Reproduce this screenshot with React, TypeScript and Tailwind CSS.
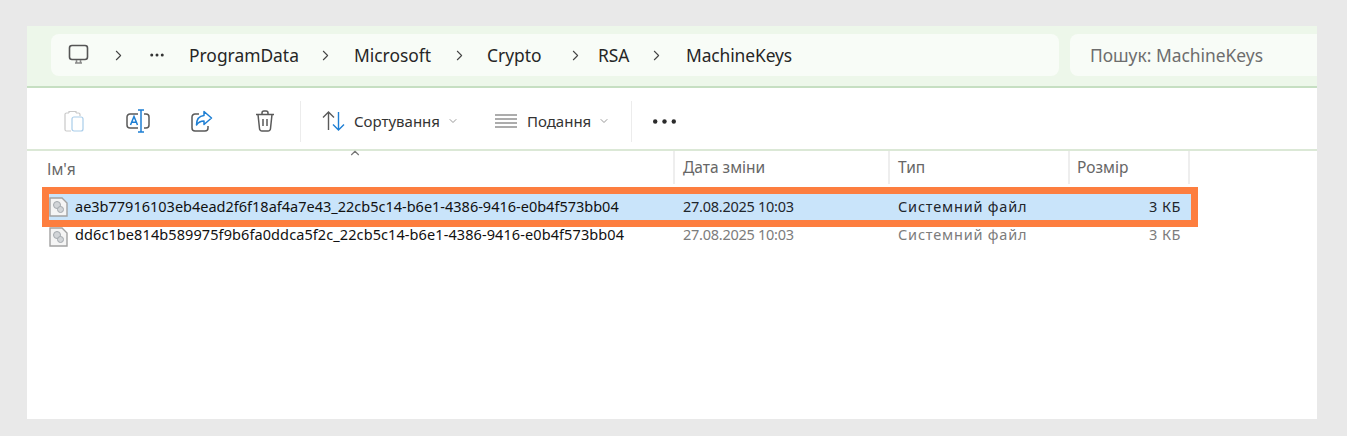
import React from "react";
import { ChevronRight, ChevronDown, ChevronUp, Ellipsis } from "lucide-react";

const crumbs = [
  { name: "ProgramData", width: "w-[109px]", gap: "ml-[19px] mr-[20px]" },
  { name: "Microsoft", width: "w-[78px]", gap: "ml-[19px] mr-[19px]" },
  { name: "Crypto", width: "w-[55px]", gap: "ml-[25px] mr-[14px]" },
  { name: "RSA", width: "w-[33px]", gap: "ml-[17px] mr-[21px]" },
];

const files = [
  {
    name: "ae3b77916103eb4ead2f6f18af4a7e43_22cb5c14-b6e1-4386-9416-e0b4f573bb04",
    tracking: "tracking-[0px]",
    selected: true,
  },
  {
    name: "dd6c1be814b589975f9b6fa0ddca5f2c_22cb5c14-b6e1-4386-9416-e0b4f573bb04",
    tracking: "tracking-[0.09px]",
    selected: false,
  },
];

function MonitorIcon() {
  return (
    <svg width="22" height="22" viewBox="0 0 22 22" fill="none" stroke="#555" strokeWidth="1.6">
      <rect x="1.5" y="1.5" width="18" height="14" rx="2.5" />
      <path d="M7 19h7M8.5 16v3M12.5 16v3" stroke="#888" />
    </svg>
  );
}

function PasteIcon() {
  return (
    <svg width="20" height="22" viewBox="0 0 20 22" fill="none" strokeWidth="1.2">
      <path d="M5 3H2.5A1.5 1.5 0 0 0 1 4.5v15A1.5 1.5 0 0 0 2.5 21H7" stroke="#c9c9c9" />
      <path d="M5 3V1.5h7V3M12 3h2.5A1.5 1.5 0 0 1 16 4.5V6" stroke="#c9c9c9" />
      <rect x="8" y="7" width="11" height="14" rx="2" stroke="#a9cdea" />
    </svg>
  );
}

function RenameIcon() {
  return (
    <svg width="24" height="24" viewBox="0 0 24 24" fill="none" strokeWidth="1.5">
      <path d="M12 5H4a3 3 0 0 0-3 3v8a3 3 0 0 0 3 3h8M18 5h2a3 3 0 0 1 3 3v8a3 3 0 0 1-3 3h-2" stroke="#5a5a5a" />
      <path d="M12 1h6M12 23h6M15 1v22" stroke="#1e7fd4" />
      <path d="M4.5 16 8 7.5 11.5 16M5.7 13.2h4.6" stroke="#1e7fd4" />
    </svg>
  );
}

function ShareIcon() {
  return (
    <svg width="22" height="22" viewBox="0 0 22 22" fill="none" strokeWidth="1.5">
      <path d="M8 4H4a3 3 0 0 0-3 3v11a3 3 0 0 0 3 3h10a3 3 0 0 0 3-3v-2" stroke="#5a5a5a" />
      <path
        d="M13 1.5 20.5 8 13 14.5V11c-3.5 0-5.5 1-7.5 4 0-5.5 2.5-9 7.5-9.5z"
        stroke="#1e7fd4"
        strokeLinejoin="round"
      />
    </svg>
  );
}

function TrashIcon() {
  return (
    <svg width="20" height="22" viewBox="0 0 20 22" fill="none" stroke="#5a5a5a" strokeWidth="1.5">
      <path d="M1 4.5h18M7 4.5V3a2 2 0 0 1 2-2h2a2 2 0 0 1 2 2v1.5" />
      <path d="M3 4.5 4.5 18.5A2.5 2.5 0 0 0 7 21h6a2.5 2.5 0 0 0 2.5-2.5L17 4.5" />
      <path d="M8 9v7M12 9v7" />
    </svg>
  );
}

function SortIcon() {
  return (
    <svg width="23" height="20" viewBox="0 0 23 20" fill="none" strokeWidth="1.4">
      <path d="M6.5 19V1M1 6.5l5.500-5.500 5.500 5.500" stroke="#5a5a5a" />
      <path d="M16.500 1v18M11 13.500l5.500 5.500 5.500-5.500" stroke="#1e7fd4" />
    </svg>
  );
}

function ListIcon() {
  return (
    <svg width="22" height="14" viewBox="0 0 22 14" fill="none" stroke="#5a5a5a" strokeWidth="1.2">
      <path d="M0 1h22M0 5h22M0 9h22M0 13h22" />
    </svg>
  );
}

function MoreIcon() {
  return (
    <svg width="23" height="5" viewBox="0 0 23 5" fill="#2b2b2b">
      <circle cx="2.2" cy="2.5" r="2.2" />
      <circle cx="11.5" cy="2.5" r="2.2" />
      <circle cx="20.8" cy="2.5" r="2.2" />
    </svg>
  );
}

function FileIcon() {
  return (
    <svg width="19" height="20" viewBox="0 0 19 20" className="shrink-0">
      <path d="M1 1h12l5 5v13H1z" fill="#f5f5f5" stroke="#a2a2a2" strokeWidth="1.4" />
      <circle cx="8" cy="8" r="3.5" fill="#d2d5d8" stroke="#a4a9ae" />
      <circle cx="11.5" cy="12.5" r="3" fill="#d2d5d8" stroke="#a4a9ae" />
    </svg>
  );
}

function Divider() {
  return <div className="w-px h-[41px] bg-[#ececec]" />;
}

function FileRow({ name, tracking, selected }: { name: string; tracking: string; selected: boolean }) {
  const muted = selected ? "text-[#1f262c]" : "text-[#7c7c7c]";
  const rowShape = selected ? "h-[26px] bg-[#c9e4fa] items-center" : "h-[20px] items-start leading-[14px]";
  return (
    <div className={`flex text-[14.5px] ${rowShape}`}>
      <div className="w-[634px] flex items-start gap-[7px]">
        <FileIcon />
        <span className={`text-[#111] whitespace-nowrap ${tracking} ${selected ? "leading-[19px]" : ""}`}>{name}</span>
      </div>
      <div className={`w-[215px] tracking-[-0.26px] ${muted}`}>27.08.2025 10:03</div>
      <div className={`w-[171px] tracking-[0.8px] ${muted}`}>Системний файл</div>
      <div className={`w-[112px] text-right tracking-[0.5px] ${muted}`}>3 КБ</div>
    </div>
  );
}

export default function App() {
  return (
    <div className="h-[436px] bg-[#e9e9e9] pt-[26px] pb-[17px] pl-[27px] pr-[30px] font-['Noto_Sans',sans-serif] overflow-hidden">
      <div className="h-full bg-white flex flex-col">
        {/* address bar */}
        <div className="h-[62px] shrink-0 bg-[#edf7ea] border-b-2 border-[#c6dfc2] flex pt-[8px] pl-[24px]">
          <div className="w-[1008px] h-[42px] bg-[#f8fcf7] rounded-lg flex items-center pl-[17px] text-[17.4px] text-[#262626]">
            <MonitorIcon />
            <ChevronRight size={17} strokeWidth={1.5} color="#444" className="ml-[20px]" />
            <Ellipsis size={18} strokeWidth={2} color="#333" className="ml-[21px] mr-[23px]" />
            {crumbs.map((c) => (
              <React.Fragment key={c.name}>
                <span className={c.width}>{c.name}</span>
                <ChevronRight size={17} strokeWidth={1.5} color="#444" className={c.gap} />
              </React.Fragment>
            ))}
            <span className="tracking-[-0.1px]">MachineKeys</span>
          </div>
          <div className="ml-[11px] flex-1 h-[42px] bg-[#f8fcf7] rounded-l-lg flex items-center pl-[20px] text-[17.4px] text-[#6d6d6d]">
            Пошук: MachineKeys
          </div>
        </div>

        {/* command bar */}
        <div className="h-[63px] shrink-0 border-b-2 border-[#dbe8d6] flex items-center pt-[5px] text-[15px] text-[#333]">
          <div className="ml-[37px] w-[62px]"><PasteIcon /></div>
          <div className="w-[65px]"><RenameIcon /></div>
          <div className="w-[64px]"><ShareIcon /></div>
          <div className="w-[45px]"><TrashIcon /></div>
          <Divider />
          <div className="ml-[21px]"><SortIcon /></div>
          <span className="ml-[9px] pt-[1px]">Сортування</span>
          <ChevronDown size={12} color="#999" className="ml-[7px]" />
          <div className="ml-[36px]"><ListIcon /></div>
          <span className="ml-[10px] pt-[1px]">Подання</span>
          <ChevronDown size={12} color="#999" className="ml-[7px]" />
          <div className="ml-[21px]"><Divider /></div>
          <div className="ml-[21px]"><MoreIcon /></div>
        </div>

        {/* column headers */}
        <div className="h-[33px] shrink-0 flex text-[15.5px] text-[#666]">
          <div className="relative w-[648px] pl-[20px] pt-[7px] border-r-2 border-[#eeeeee]">
            Ім'я
            <ChevronUp size={14} color="#777" className="absolute left-[321px] -top-[5px]" />
          </div>
          <div className="w-[215px] pl-[8px] pt-[5px] border-r-2 border-[#eeeeee]">Дата зміни</div>
          <div className="w-[180px] pl-[8px] pt-[5px] border-r-2 border-[#eeeeee]">Тип</div>
          <div className="w-[120px] pl-[7px] pt-[5px] border-r-2 border-[#eeeeee]">Розмір</div>
        </div>

        {/* files */}
        <div className="mt-[3px] ml-[15px] w-[1156px]">
          {files.map((f) =>
            f.selected ? (
              <div key={f.name} className="border-[7px] border-[#fd7e3f]">
                <FileRow name={f.name} tracking={f.tracking} selected />
              </div>
            ) : (
              <div key={f.name} className="px-[7px]">
                <FileRow name={f.name} tracking={f.tracking} selected={false} />
              </div>
            )
          )}
        </div>
      </div>
    </div>
  );
}
